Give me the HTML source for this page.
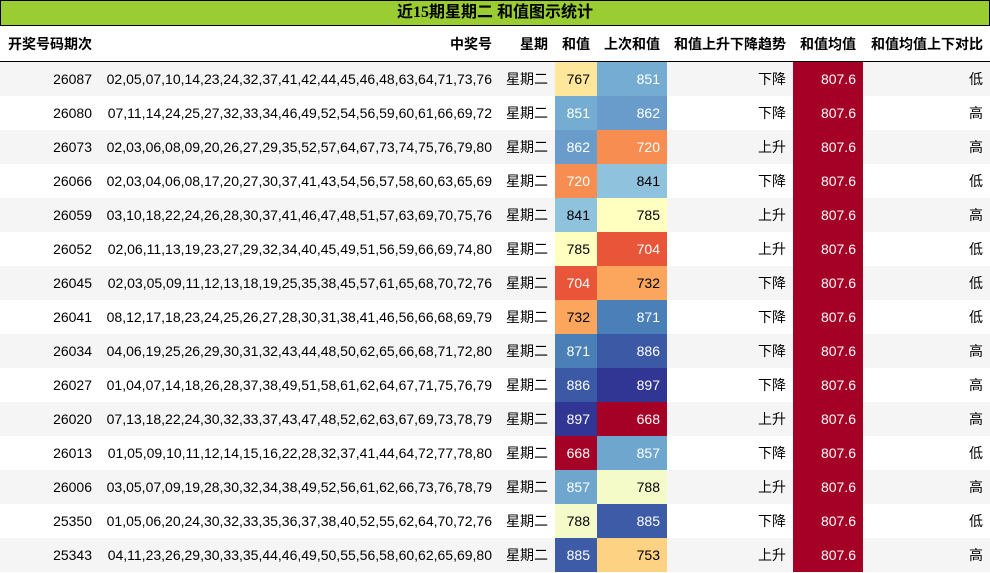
<!DOCTYPE html>
<html><head><meta charset="utf-8"><style>
body{margin:0;width:990px;height:573px;overflow:hidden;background:#fff;font-family:"Liberation Sans","Noto Sans CJK SC",sans-serif;font-size:14px;color:#000}
.title{box-sizing:border-box;height:26px;background:#9acd32;border:1px solid #000;text-align:center;font-weight:bold;font-size:16px;line-height:24px;font-family:"Liberation Serif","Noto Sans CJK SC",serif}
table{border-collapse:collapse;table-layout:fixed;width:990px}
td,th{padding:0 7px 0 0;text-align:right;white-space:nowrap;overflow:hidden}
th{height:35px;font-weight:bold;border-bottom:1.5px solid #000}
th:first-child{text-align:left;padding-left:8px}
td{height:34px}
tr.g td{background:#f5f5f5}
.w{color:#fff}
.m{background:#a50026 !important;color:#fff}
</style></head><body>
<div class="title">近15期星期二 和值图示统计</div>
<table>
<colgroup><col style="width:99px"><col style="width:400px"><col style="width:56px"><col style="width:42px"><col style="width:70px"><col style="width:126px"><col style="width:70px"><col style="width:127px"></colgroup>
<tr><th>开奖号码期次</th><th>中奖号</th><th>星期</th><th>和值</th><th>上次和值</th><th>和值上升下降趋势</th><th>和值均值</th><th>和值均值上下对比</th></tr>
<tr class="g"><td>26087</td><td>02,05,07,10,14,23,24,32,37,41,42,44,45,46,48,63,64,71,73,76</td><td>星期二</td><td style="background:#fee79b">767</td><td class="w" style="background:#74add1">851</td><td>下降</td><td class="m">807.6</td><td>低</td></tr>
<tr><td>26080</td><td>07,11,14,24,25,27,32,33,34,46,49,52,54,56,59,60,61,66,69,72</td><td>星期二</td><td class="w" style="background:#74add1">851</td><td class="w" style="background:#6a9ccb">862</td><td>下降</td><td class="m">807.6</td><td>高</td></tr>
<tr class="g"><td>26073</td><td>02,03,06,08,09,20,26,27,29,35,52,57,64,67,73,74,75,76,79,80</td><td>星期二</td><td class="w" style="background:#6a9ccb">862</td><td class="w" style="background:#f88d52">720</td><td>上升</td><td class="m">807.6</td><td>高</td></tr>
<tr><td>26066</td><td>02,03,04,06,08,17,20,27,30,37,41,43,54,56,57,58,60,63,65,69</td><td>星期二</td><td class="w" style="background:#f88d52">720</td><td style="background:#8fc3dd">841</td><td>下降</td><td class="m">807.6</td><td>低</td></tr>
<tr class="g"><td>26059</td><td>03,10,18,22,24,26,28,30,37,41,46,47,48,51,57,63,69,70,75,76</td><td>星期二</td><td style="background:#8fc3dd">841</td><td style="background:#ffffbf">785</td><td>上升</td><td class="m">807.6</td><td>高</td></tr>
<tr><td>26052</td><td>02,06,11,13,19,23,27,29,32,34,40,45,49,51,56,59,66,69,74,80</td><td>星期二</td><td style="background:#ffffbf">785</td><td class="w" style="background:#e95538">704</td><td>上升</td><td class="m">807.6</td><td>低</td></tr>
<tr class="g"><td>26045</td><td>02,03,05,09,11,12,13,18,19,25,35,38,45,57,61,65,68,70,72,76</td><td>星期二</td><td class="w" style="background:#e95538">704</td><td style="background:#fca55d">732</td><td>下降</td><td class="m">807.6</td><td>低</td></tr>
<tr><td>26041</td><td>08,12,17,18,23,24,25,26,27,28,30,31,38,41,46,56,66,68,69,79</td><td>星期二</td><td style="background:#fca55d">732</td><td class="w" style="background:#4a7fb8">871</td><td>下降</td><td class="m">807.6</td><td>低</td></tr>
<tr class="g"><td>26034</td><td>04,06,19,25,26,29,30,31,32,43,44,48,50,62,65,66,68,71,72,80</td><td>星期二</td><td class="w" style="background:#4a7fb8">871</td><td class="w" style="background:#3c59a6">886</td><td>下降</td><td class="m">807.6</td><td>高</td></tr>
<tr><td>26027</td><td>01,04,07,14,18,26,28,37,38,49,51,58,61,62,64,67,71,75,76,79</td><td>星期二</td><td class="w" style="background:#3c59a6">886</td><td class="w" style="background:#313695">897</td><td>下降</td><td class="m">807.6</td><td>高</td></tr>
<tr class="g"><td>26020</td><td>07,13,18,22,24,30,32,33,37,43,47,48,52,62,63,67,69,73,78,79</td><td>星期二</td><td class="w" style="background:#313695">897</td><td class="w" style="background:#a50026">668</td><td>上升</td><td class="m">807.6</td><td>高</td></tr>
<tr><td>26013</td><td>01,05,09,10,11,12,14,15,16,22,28,32,37,41,44,64,72,77,78,80</td><td>星期二</td><td class="w" style="background:#a50026">668</td><td class="w" style="background:#6ea6ce">857</td><td>下降</td><td class="m">807.6</td><td>低</td></tr>
<tr class="g"><td>26006</td><td>03,05,07,09,19,28,30,32,34,38,49,52,56,61,62,66,73,76,78,79</td><td>星期二</td><td class="w" style="background:#6ea6ce">857</td><td style="background:#f5fbc8">788</td><td>上升</td><td class="m">807.6</td><td>高</td></tr>
<tr><td>25350</td><td>01,05,06,20,24,30,32,33,35,36,37,38,40,52,55,62,64,70,72,76</td><td>星期二</td><td style="background:#f5fbc8">788</td><td class="w" style="background:#3d5ba7">885</td><td>下降</td><td class="m">807.6</td><td>低</td></tr>
<tr class="g"><td>25343</td><td>04,11,23,26,29,30,33,35,44,46,49,50,55,56,58,60,62,65,69,80</td><td>星期二</td><td class="w" style="background:#3d5ba7">885</td><td style="background:#fed283">753</td><td>上升</td><td class="m">807.6</td><td>高</td></tr>
</table>
</body></html>
